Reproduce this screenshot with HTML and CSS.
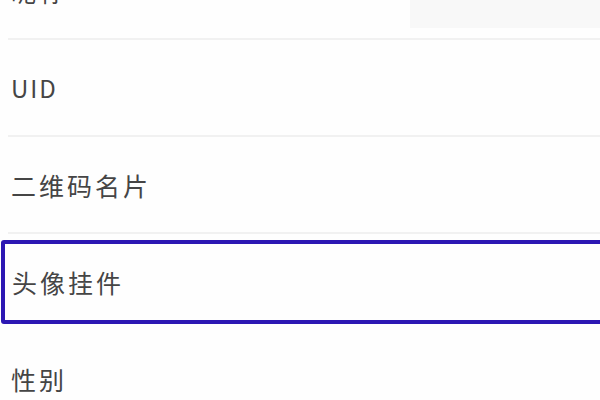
FILE: index.html
```html
<!DOCTYPE html>
<html lang="zh-CN">
<head>
    <meta charset="UTF-8">
    <meta name="viewport" content="width=device-width, initial-scale=1.0">
    <title>个人资料</title>
    <link rel="stylesheet" href="styles.css">
</head>
<body>
    <div class="lista">
        <div class="item">
            <span class="label">昵称</span>
            <div class="campo"></div>
        </div>
        <div class="item">
            <span class="label latin">UID</span>
        </div>
        <div class="item">
            <span class="label">二维码名片</span>
        </div>
        <div class="item marcado">
            <div class="moldura">
                <span class="label">头像挂件</span>
            </div>
        </div>
        <div class="item">
            <span class="label">性别</span>
        </div>
    </div>
</body>
</html>
```

FILE: styles.css
```css
body {
    margin: 0;
    background: #fefefe;
    font-family: "Noto Sans CJK SC", "Noto Sans", sans-serif;
    overflow: hidden;
}
.lista {
    margin-top: -57px;
}
.item {
    height: 95px;
    margin-left: 8px;
    padding-left: 3px;
    border-bottom: 2px solid #f1f1f1;
    display: flex;
    align-items: center;
}
.label {
    font-size: 25px;
    letter-spacing: 3px;
    color: #454545;
}
.label.latin {
    font-size: 24px;
    letter-spacing: 2px;
}
.campo {
    margin-left: auto;
    align-self: flex-end;
    width: 190px;
    height: 60px;
    margin-bottom: 10px;
    background: #f8f8f8;
}
.item.marcado {
    height: 97px;
    margin-left: 0;
    padding: 6px 0 0 1px;
    border-bottom: none;
    align-items: flex-start;
    box-sizing: border-box;
}
.moldura {
    flex-shrink: 0;
    width: calc(100% + 10px);
    height: 84px;
    box-sizing: border-box;
    border: 4px solid #2c17b3;
    border-radius: 3px;
    padding-left: 7px;
    display: flex;
    align-items: center;
}
```
